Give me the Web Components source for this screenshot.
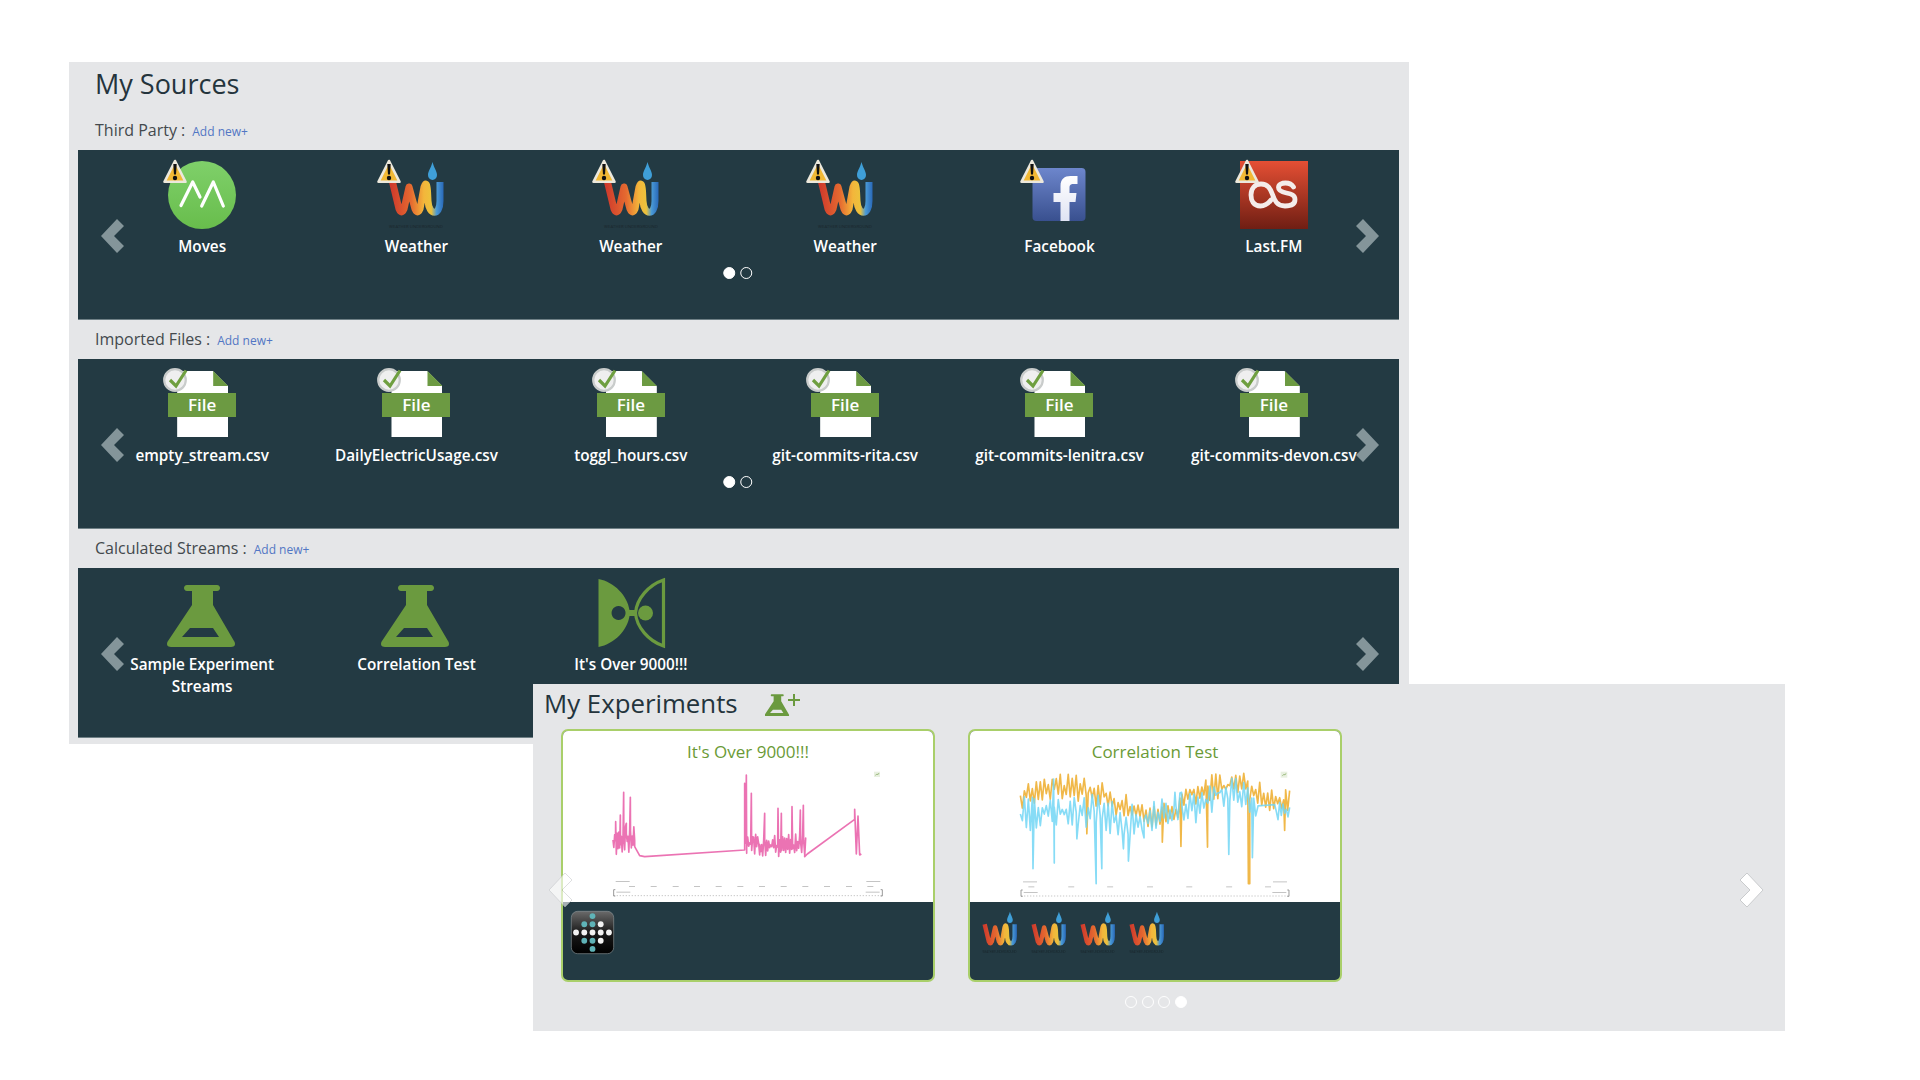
<!doctype html>
<html>
<head>
<meta charset="utf-8">
<title>My Sources</title>
<style>
  html, body { margin: 0; background: #fff; }
  body { font-family: "Open Sans", "Liberation Sans", sans-serif; overflow: hidden; height: 1080px; }
  main { display: block; position: relative; height: 1080px; padding: 62px 0 0 69px; box-sizing: border-box; filter: blur(0.45px); }
</style>
</head>
<body>
<main>
  <source-panel>
    <source-band heading="Third Party :" dots="2">
      <source-item label="Moves" icon="moves" badge="warn"></source-item>
      <source-item label="Weather" icon="wu" badge="warn"></source-item>
      <source-item label="Weather" icon="wu" badge="warn"></source-item>
      <source-item label="Weather" icon="wu" badge="warn"></source-item>
      <source-item label="Facebook" icon="facebook" badge="warn"></source-item>
      <source-item label="Last.FM" icon="lastfm" badge="warn"></source-item>
    </source-band>
    <source-band heading="Imported Files :" dots="2">
      <source-item label="empty_stream.csv" icon="file" badge="ok"></source-item>
      <source-item label="DailyElectricUsage.csv" icon="file" badge="ok"></source-item>
      <source-item label="toggl_hours.csv" icon="file" badge="ok"></source-item>
      <source-item label="git-commits-rita.csv" icon="file" badge="ok"></source-item>
      <source-item label="git-commits-lenitra.csv" icon="file" badge="ok"></source-item>
      <source-item label="git-commits-devon.csv" icon="file" badge="ok"></source-item>
    </source-band>
    <source-band heading="Calculated Streams :">
      <source-item label="Sample Experiment Streams" icon="flask"></source-item>
      <source-item label="Correlation Test" icon="flask"></source-item>
      <source-item label="It's Over 9000!!!" icon="bowtie"></source-item>
    </source-band>
  </source-panel>
  <experiment-panel>
    <experiment-card heading="It's Over 9000!!!" chart="pink">
      <app-icon name="fitbit"></app-icon>
    </experiment-card>
    <experiment-card heading="Correlation Test" chart="corr">
      <app-icon name="wu"></app-icon>
      <app-icon name="wu"></app-icon>
      <app-icon name="wu"></app-icon>
      <app-icon name="wu"></app-icon>
    </experiment-card>
  </experiment-panel>
</main>

<script>
const FLASK = "M19 6h30c4 0 4 6 0 6h-4v14l21 36c2 3 1 6-3 6H3c-4 0-5-3-3-6l24-36V12h-5c-4 0-4-6 0-6zM22 49l-8 9h37l-6-9z"

const ICONS = {
  moves: `<defs><linearGradient id="g" x1="0" y1="0" x2="0" y2="1"><stop offset="0" stop-color="#7fd06a"/><stop offset="1" stop-color="#68bd4c"/></linearGradient></defs>
    <circle cx="34" cy="34" r="34" fill="url(#g)"/>
    <path d="M13 44.500 24.700 21 32 36M33.700 45 45.300 21 55.300 45" fill="none" stroke="#fff" stroke-width="3.200" stroke-linecap="round" stroke-linejoin="round"/>`,
  wu: `<defs><linearGradient id="g" gradientUnits="userSpaceOnUse" x1="9" y1="0" x2="62" y2="0"><stop offset="0" stop-color="#cf3a2c"/><stop offset=".38" stop-color="#e56a30"/><stop offset=".62" stop-color="#f3b63b"/><stop offset=".76" stop-color="#ecc23c"/><stop offset=".86" stop-color="#4a9ad6"/><stop offset="1" stop-color="#2765b6"/></linearGradient></defs>
    <path d="M50.500 1c1.500 6 4.500 9 4.500 13a4.500 5 0 0 1-9 0c0-4 3-7 4.500-13z" fill="#3f9fd8"/>
    <path d="M10.500 21 17 48Q19.500 54 22 48L27 26 33 48Q35.500 54 38 48L42 26C44 20 45 24 45.500 30L46 40C47 55 58 55 58 40V21" fill="none" stroke="url(#g)" stroke-width="7" stroke-linejoin="round"/>
    <text x="34" y="67" font-size="4.300" text-anchor="middle" fill="#1a262c" font-family="Open Sans, sans-serif">WEATHER UNDERGROUND</text>`,
  facebook: `<defs><linearGradient id="g" x1="0" y1="0" x2="0" y2="1"><stop offset="0" stop-color="#6d86cc"/><stop offset="1" stop-color="#39508f"/></linearGradient><linearGradient id="f" x1="0" y1="0" x2="0" y2="1"><stop offset="0" stop-color="#fff"/><stop offset="1" stop-color="#dfe3f3"/></linearGradient></defs>
    <g transform="translate(7.500 7)"><rect width="53" height="53" rx="4" fill="url(#g)"/>
    <path d="M28 53V34H21V25H28V18C28 11 32 8 38 8H45V16H41C38 16 37 17 37 20V25H44L43 34H37V53z" fill="url(#f)"/></g>`,
  lastfm: `<defs><linearGradient id="g" x1="0" y1="0" x2="0" y2="1"><stop offset="0" stop-color="#e54f34"/><stop offset="1" stop-color="#6f1e13"/></linearGradient></defs>
    <rect width="68" height="68" fill="url(#g)"/>
    <path d="M31 39C28 43 25 45 20.500 45 13.500 45 11 39.500 11 34 11 28 14.500 23 21 23 28 23 30.500 28 32.500 33.500 34.500 39.500 37 45 45 45 51 45 55 43 55 38.500 55 34 51.500 33 46.500 32 41.500 31 38.500 29.500 38.500 26.500 38.500 23.500 42 22 45.500 22 49.500 22 52 23.500 53.500 26" fill="none" stroke="#f4ecea" stroke-width="4.800" stroke-linecap="round"/>`,
  flask: `<path d="${FLASK}" fill="#6b9a3f" fill-rule="evenodd"/>`,
  bowtie: `<g transform="translate(1.500 0)"><path d="M0 0C16 3 29 17 31 31H37V37H31C29 51 16 65 0 68zM20 27a7 7 0 1 0 .1 0z" fill="#6b9a3f" fill-rule="evenodd"/>
    <path d="M65 1V67C50 62 38 48 37 34 38 20 50 6 65 1z" fill="none" stroke="#6b9a3f" stroke-width="3.200"/>
    <circle cx="47" cy="34" r="7.500" fill="#6b9a3f"/></g>`,
  fitbit: (() => {
    const dots = [[0,2,"t"],[1,1,"t"],[1,2,"t"],[1,3,"w"],[2,0,"w"],[2,1,"w"],[2,2,"w"],[2,3,"w"],[2,4,"w"],[3,1,"t"],[3,2,"t"],[3,3,"w"],[4,2,"t"]]
    return `<defs><linearGradient id="g" x1="0" y1="0" x2="0" y2="1"><stop offset="0" stop-color="#6a6a6a"/><stop offset=".5" stop-color="#1a1a1a"/><stop offset="1" stop-color="#000"/></linearGradient></defs>
      <rect x=".5" y=".5" width="67" height="67" rx="10" fill="url(#g)" stroke="#8a9498"/>` +
      dots.map(([r, c, k]) => `<circle cx="${8 + c * 13}" cy="${8 + r * 13}" r="4.600" fill="${k == "t" ? "#5fb3b7" : "#f2f2f2"}"/>`).join("")
  })(),
}

const iconTemplate = document.createElement("template")
iconTemplate.innerHTML = `
  <style>
    :host { display: block; width: var(--icon-size, 68px); height: var(--icon-size, 68px); position: relative; }
    svg { display: block; width: 100%; height: 100%; overflow: visible; }
    .file { position: absolute; inset: 0; }
    .page { position: absolute; left: 9px; width: 51px; top: 1px; bottom: 1px; background: #fff; clip-path: polygon(0 0, 70% 0, 100% 23%, 100% 100%, 0 100%); }
    .fold { position: absolute; left: 45px; top: 1px; width: 15px; height: 15px; background: #6c9a42; clip-path: polygon(0 0, 100% 100%, 0 100%); }
    .band { position: absolute; left: 0; right: 0; top: 23px; height: 24px; background: #6c9a42; color: #fff; font: 600 17px/23px "Open Sans", "Liberation Sans", sans-serif; text-align: center; }
  </style>
`

class AppIcon extends HTMLElement {
  constructor() {
    super()
    this.attachShadow({ mode: "open" }).append(iconTemplate.content.cloneNode(true))
  }
  connectedCallback() {
    const name = this.getAttribute("name")
    const holder = document.createElement("div")
    if (name == "file") {
      holder.className = "file"
      holder.innerHTML = `<div class="page"></div><div class="fold"></div><div class="band">File</div>`
    } else {
      holder.innerHTML = `<svg viewBox="0 0 68 68">${ICONS[name]}</svg>`
      holder.style.cssText = "width:100%;height:100%"
    }
    this.shadowRoot.append(holder)
  }
}

const itemTemplate = document.createElement("template")
itemTemplate.innerHTML = `
  <style>
    :host { display: flex; flex-direction: column; align-items: center; position: relative; min-width: 0; }
    .icon { position: relative; }
    .badge { position: absolute; left: -5px; top: -2px; width: 24px; height: 25px; overflow: visible; }
    .label { margin-top: 6px; padding: 0 20px; color: #fff; font: 600 15.300px/22px "Open Sans", "Liberation Sans", sans-serif; text-align: center; }
  </style>
  <div class="icon"></div>
  <div class="label"></div>
`

class SourceItem extends HTMLElement {
  constructor() {
    super()
    this.attachShadow({ mode: "open" }).append(itemTemplate.content.cloneNode(true))
  }
  connectedCallback() {
    const root = this.shadowRoot
    const icon = root.querySelector(".icon")
    icon.innerHTML = `<app-icon name="${this.getAttribute("icon")}"></app-icon>`
    root.querySelector(".label").textContent = this.getAttribute("label")
    const badge = this.getAttribute("badge")
    if (badge == "warn") {
      icon.insertAdjacentHTML("beforeend", `<svg class="badge" viewBox="0 0 24 25">
        <path d="M12 2 22.500 22.800H1.500z" fill="#f2b935" stroke="#ece8dc" stroke-width="2.600" stroke-linejoin="round"/>
        <path d="M10.300 5h3.400L13 15.500h-2z" fill="#111"/><circle cx="12" cy="19" r="2.200" fill="#111"/></svg>`)
    }
    if (badge == "ok") {
      icon.insertAdjacentHTML("beforeend", `<svg class="badge" viewBox="0 0 24 25">
        <circle cx="12" cy="12" r="10.800" fill="#efefef" stroke="#c9cccb" stroke-width="2.200"/>
        <path d="M7 12l6 6 10-15.500" fill="none" stroke="#6f9f40" stroke-width="3.200"/></svg>`)
    }
  }
}

const dotsTemplate = document.createElement("template")
dotsTemplate.innerHTML = `
  <style>
    :host { display: flex; gap: var(--dot-gap, 5.500px); }
    i { display: block; width: 12px; height: 12px; border-radius: 50%; box-sizing: border-box; border: 1px solid #fff; }
    i.on { background: #fff; }
  </style>
`

class CarouselDots extends HTMLElement {
  constructor() {
    super()
    this.attachShadow({ mode: "open" }).append(dotsTemplate.content.cloneNode(true))
  }
  connectedCallback() {
    const count = +this.getAttribute("count")
    const active = +this.getAttribute("active")
    for (let n = 0; n < count; n++) {
      const dot = document.createElement("i")
      if (n == active) dot.className = "on"
      this.shadowRoot.append(dot)
    }
  }
}

const arrowTemplate = document.createElement("template")
arrowTemplate.innerHTML = `
  <style>
    :host { display: block; width: 23px; height: 34px; }
    svg { display: block; width: 100%; height: 100%; overflow: visible; }
    polygon { fill: var(--arrow-fill, #84959a); stroke: var(--arrow-edge, none); stroke-width: 1; }
  </style>
  <svg viewBox="0 0 23 34"><polygon points="16,0 23,7 13,17 23,27 16,34 0,17"/></svg>
`

class CarouselArrow extends HTMLElement {
  constructor() {
    super()
    this.attachShadow({ mode: "open" }).append(arrowTemplate.content.cloneNode(true))
  }
  connectedCallback() {
    if (this.hasAttribute("right")) this.style.transform = "scaleX(-1)"
  }
}

const bandTemplate = document.createElement("template")
bandTemplate.innerHTML = `
  <style>
    :host { display: block; }
    .head { height: 39px; box-sizing: border-box; padding: 6px 0 0 17px; display: flex; align-items: baseline; color: #43494d; font-size: 16px; line-height: 26px; }
    .add { margin-left: 7px; color: #5276c4; font-size: 12px; }
    .band { position: relative; height: 170px; box-sizing: border-box; background: #233a43; border-bottom: 1px solid #6f8086; padding: 11px 18px 0 17px; display: grid; grid-template-columns: repeat(6, 1fr); align-items: start; }
    .left, .right { position: absolute; top: 69px; }
    .left { left: 23px; }
    .right { right: 20px; }
    carousel-dots { position: absolute; left: 50%; bottom: 40px; margin-left: -1px; transform: translateX(-50%); }
  </style>
  <div class="head"><span class="title"></span><span class="add">Add new+</span></div>
  <div class="band">
    <slot></slot>
    <carousel-arrow class="left"></carousel-arrow>
    <carousel-arrow class="right" right></carousel-arrow>
  </div>
`

class SourceBand extends HTMLElement {
  constructor() {
    super()
    this.attachShadow({ mode: "open" }).append(bandTemplate.content.cloneNode(true))
  }
  connectedCallback() {
    const root = this.shadowRoot
    root.querySelector(".title").textContent = this.getAttribute("heading")
    if (this.hasAttribute("dots")) {
      root.querySelector(".band").insertAdjacentHTML("beforeend", `<carousel-dots count="${this.getAttribute("dots")}" active="0"></carousel-dots>`)
    }
  }
}

const panelTemplate = document.createElement("template")
panelTemplate.innerHTML = `
  <style>
    :host { display: block; width: 1340px; height: 682px; box-sizing: border-box; background: #e5e6e8; padding: 0 10px 0 9px; }
    h1 { margin: 0 0 0 17px; height: 49px; font: 400 27px/44px "Open Sans", "Liberation Sans", sans-serif; color: #24343c; }
  </style>
  <h1>My Sources</h1>
  <slot></slot>
`

class SourcePanel extends HTMLElement {
  constructor() {
    super()
    this.attachShadow({ mode: "open" }).append(panelTemplate.content.cloneNode(true))
  }
}

// seeded so the chart comes out the same on every run
function random(seed) {
  let s = seed
  return () => (s = (s * 16807) % 2147483647) / 2147483647
}

function baseAt(line, x) {
  for (let n = 1; n < line.length; n++) {
    if (x <= line[n][0]) {
      const [x0, y0] = line[n - 1], [x1, y1] = line[n]
      return y0 + (y1 - y0) * (x - x0) / (x1 - x0)
    }
  }
  return line[line.length - 1][1]
}

function noisy(line, from, to, step, amp, seed, spikes = []) {
  const r = random(seed), pts = []
  let next = 0
  for (let x = from; x <= to; x += step) {
    while (next < spikes.length && spikes[next][0] <= x) pts.push(spikes[next++])
    const flip = pts.length % 2 ? 1 : -1
    pts.push([x, baseAt(line, x) + flip * r() * amp])
  }
  return pts
}

function poly(pts, dx, dy, color, width, opacity = 1) {
  const d = pts.map(p => `${(p[0] - dx).toFixed(1)},${(p[1] - dy).toFixed(1)}`).join(" ")
  return `<polyline points="${d}" fill="none" stroke="${color}" stroke-width="${width}" stroke-opacity="${opacity}" stroke-linejoin="round"/>`
}

function axis(w, top, ticks) {
  const c = "#c4c4c4"
  let out = `<rect x="8" y="${top}" width="42" height="3" fill="${c}"/><rect x="${w - 48}" y="${top}" width="42" height="3" fill="${c}"/>`
  for (const x of ticks) out += `<rect x="${x - 9}" y="${top + 15}" width="18" height="3" fill="${c}"/>`
  out += `<rect x="10" y="${top + 32}" width="42" height="3" fill="${c}"/><rect x="${w - 50}" y="${top + 32}" width="42" height="3" fill="${c}"/>`
  out += `<path d="M2 ${top + 44}H${w}" stroke="#c8c8c8" stroke-width="3" stroke-dasharray="4 5" fill="none"/>`
  out += `<path d="M7 ${top + 26}H2V${top + 45}H7M${w - 5} ${top + 26}H${w}V${top + 45}H${w - 5}" stroke="#9a9a9a" stroke-width="3" fill="none"/>`
  return out
}

const CHARTS = {
  pink() {
    const p = "#e85ba6"
    const a = noisy([[250, 480], [315, 480]], 250, 315, 2.500, 50, 11, [[258, 425], [272, 405], [282, 337], [290, 430], [302, 352]])
    const b = [[315, 500], [330, 527], [345, 530], [645, 510]]
    const c = noisy([[645, 490], [665, 490], [690, 500], [830, 495]], 645, 830, 3, 34, 23, [[645, 310], [650, 285], [651, 520], [665, 340], [672, 472], [685, 478], [690, 525], [705, 400], [745, 385], [755, 400], [787, 380], [812, 390], [821, 376]])
    const d = [[825, 530], [833, 522], [975, 418], [975, 388], [980, 522], [985, 408], [990, 525], [995, 522]]
    return `<svg viewBox="0 0 810 381" style="margin-left:50px;width:270px;height:127px">
      <rect x="783" y="5" width="18" height="16" fill="#e8f0e0"/><path d="M787 16l5-4 3 2 3-5" stroke="#7fa55a" stroke-width="2" fill="none"/>
      <g style="filter:blur(.4px)">${poly([...a, ...b, ...c, ...d], 250, 270, p, 5, .85)}</g>
      ${axis(808, 333, [57, 122, 188, 252, 317, 382, 447, 512, 577, 642, 708, 772])}
    </svg>`
  },
  corr() {
    const orange = [[180, 225], [300, 200], [340, 200], [420, 220], [500, 262], [600, 290], [650, 280], [700, 210], [780, 195], [860, 195], [900, 212], [950, 240], [990, 240]]
    const blue = [[180, 280], [300, 275], [400, 270], [500, 305], [600, 275], [700, 260], [780, 215], [860, 225], [880, 270], [990, 275]]
    const o = noisy(orange, 180, 990, 6, 42, 7, [[380, 340], [607, 365], [663, 378], [743, 380], [866, 490], [870, 490], [975, 330]])
    const bl = [
      ...noisy(blue, 180, 890, 6, 52, 41, [[218, 445], [280, 175], [282, 428], [350, 355], [408, 490], [425, 445], [490, 385], [505, 422], [552, 352], [645, 215], [665, 215], [807, 402], [878, 412]]),
      [895, 256], [945, 252],
      ...noisy(blue, 950, 990, 5, 36, 5),
    ]
    return `<svg viewBox="0 0 810 370" style="margin-left:50px;width:270px;height:123px">
      <rect x="783" y="-7" width="20" height="18" fill="#e8f0e0"/><path d="M788 5l5-4 3 2 3-5" stroke="#7fa55a" stroke-width="2" fill="none"/>
      <g style="filter:blur(.4px)">${poly(o, 180, 160, "#eeb035", 5, .9)}
      ${poly(bl, 180, 160, "#72d6f4", 5, .85)}</g>
      ${axis(808, 323, [33, 153, 270, 390, 508, 628, 745])}
    </svg>`
  },
}

const cardTemplate = document.createElement("template")
cardTemplate.innerHTML = `
  <style>
    :host { display: block; width: 374px; height: 253px; box-sizing: border-box; border: 2px solid #a9cf6a; border-radius: 7px; overflow: hidden; background: #233a43; }
    .top { height: 171px; box-sizing: border-box; background: #fff; padding: 8px 0 5px; display: flex; flex-direction: column; justify-content: space-between; }
    .title { text-align: center; color: #6a9a36; font: 400 17px/26px "Open Sans", "Liberation Sans", sans-serif; }
    svg { display: block; overflow: visible; }
    .sources { display: flex; gap: 6px; padding: 9px 0 0 8px; --icon-size: 43px; }
  </style>
  <div class="top"><div class="title"></div><div class="chart"></div></div>
  <div class="sources"><slot></slot></div>
`

class ExperimentCard extends HTMLElement {
  constructor() {
    super()
    this.attachShadow({ mode: "open" }).append(cardTemplate.content.cloneNode(true))
  }
  connectedCallback() {
    this.shadowRoot.querySelector(".title").textContent = this.getAttribute("heading")
    this.shadowRoot.querySelector(".chart").innerHTML = CHARTS[this.getAttribute("chart")]()
  }
}

const experimentTemplate = document.createElement("template")
experimentTemplate.innerHTML = `
  <style>
    :host { display: block; position: absolute; left: 533px; top: 684px; width: 1252px; height: 347px; background: #e5e6e8; --arrow-fill: #fff; --arrow-edge: #c9cbcd; }
    header { height: 45px; box-sizing: border-box; padding: 0 0 7px 11px; display: flex; align-items: center; gap: 27px; }
    h2 { margin: 0; font: 400 25.800px/38px "Open Sans", "Liberation Sans", sans-serif; color: #24343c; }
    header svg { width: 35px; height: 24px; margin-top: 2px; }
    .cards { display: flex; gap: 33px; padding-left: 28px; }
    carousel-dots { margin: 14px 0 0 592px; --dot-gap: 4.500px; }
    .left, .right { position: absolute; top: 189px; }
    .left { left: 16px; opacity: .6; }
    .right { right: 22px; }
  </style>
  <header>
    <h2>My Experiments</h2>
    <svg viewBox="0 0 35 24"><path transform="scale(.36)" d="${FLASK}" fill="#6b9a3f" fill-rule="evenodd"/><path d="M29 2v12M23 8h12" stroke="#6b9a3f" stroke-width="2"/></svg>
  </header>
  <div class="cards"><slot></slot></div>
  <carousel-dots count="4" active="3"></carousel-dots>
  <carousel-arrow class="left"></carousel-arrow>
  <carousel-arrow class="right" right></carousel-arrow>
`

class ExperimentPanel extends HTMLElement {
  constructor() {
    super()
    this.attachShadow({ mode: "open" }).append(experimentTemplate.content.cloneNode(true))
  }
}

customElements.define("app-icon", AppIcon)
customElements.define("source-item", SourceItem)
customElements.define("carousel-dots", CarouselDots)
customElements.define("carousel-arrow", CarouselArrow)
customElements.define("source-band", SourceBand)
customElements.define("source-panel", SourcePanel)
customElements.define("experiment-card", ExperimentCard)
customElements.define("experiment-panel", ExperimentPanel)
</script>
</body>
</html>
